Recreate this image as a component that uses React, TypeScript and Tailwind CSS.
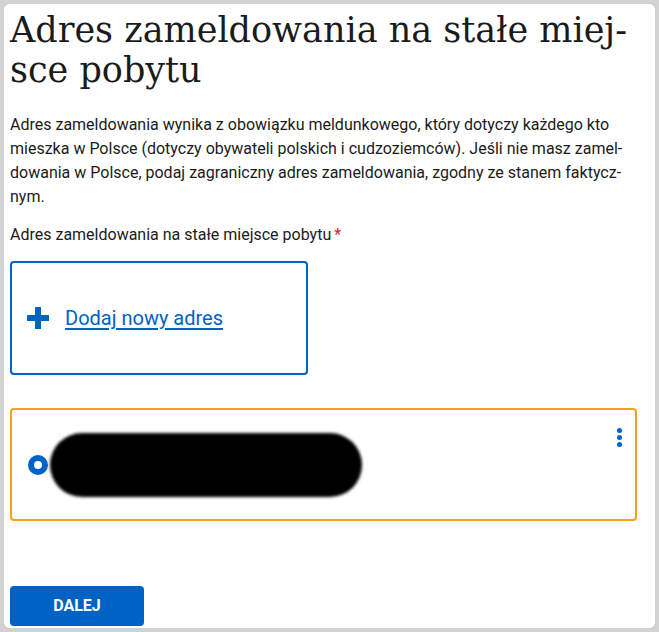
export default function App() {
  return (
    <div className="min-h-[632px] bg-[#d2d2d2] p-[4px]">
      <div className="flex min-h-[624px] flex-col rounded-[6px] bg-white pl-[6px] pr-[18px] pt-[6px] pb-[2px] font-['Roboto',sans-serif] text-[#1b1b1b]">
        <h1 className="font-['DejaVu_Serif',serif] text-[35px] leading-[40px] text-[#1b1b1b]">
          Adres zameldowania na stałe miej-
          <br />
          sce pobytu
        </h1>

        <p className="mt-[23px] text-[16px] leading-[24px]">
          Adres zameldowania wynika z obowiązku meldunkowego, który dotyczy każdego kto
          <br />
          mieszka w Polsce (dotyczy obywateli polskich i cudzoziemców). Jeśli nie masz zamel-
          <br />
          dowania w Polsce, podaj zagraniczny adres zameldowania, zgodny ze stanem faktycz-
          <br />
          nym.
        </p>

        <div className="mt-[14px] text-[16px] leading-[24px]">
          Adres zameldowania na stałe miejsce pobytu
          <span className="ml-[3px] text-[#d4213d]">*</span>
        </div>

        <div className="mt-[14px] flex h-[114px] w-[298px] items-center gap-[16px] rounded-[4px] border-2 border-[#0062c4] pl-[15px]">
          <svg width="22" height="22" viewBox="0 0 22 22" className="shrink-0">
            <rect x="8" y="0" width="6" height="22" fill="#0062c4" />
            <rect x="0" y="8" width="22" height="6" fill="#0062c4" />
          </svg>
          <a href="#" className="text-[20px] leading-[28px] text-[#0062c4] underline underline-offset-[3px]">
            Dodaj nowy adres
          </a>
        </div>

        <div className="relative mt-[33px] flex h-[113px] items-center rounded-[4px] border-2 border-[#f2a31b] pl-[16px]">
          <span className="h-[20px] w-[20px] shrink-0 rounded-full border-[6px] border-[#0062c4] bg-white" />
          <span className="ml-[2px] h-[64px] w-[312px] rounded-full bg-black blur-[1.5px]" />
          <span className="absolute right-[13px] top-[18px] flex flex-col gap-[2px]">
            <span className="h-[5px] w-[5px] rounded-full bg-[#0062c4]" />
            <span className="h-[5px] w-[5px] rounded-full bg-[#0062c4]" />
            <span className="h-[5px] w-[5px] rounded-full bg-[#0062c4]" />
          </span>
        </div>

        <button className="mt-[65px] h-[40px] w-[134px] rounded-[4px] bg-[#0062c4] text-[16px] font-bold text-white">
          DALEJ
        </button>
      </div>
    </div>
  );
}
